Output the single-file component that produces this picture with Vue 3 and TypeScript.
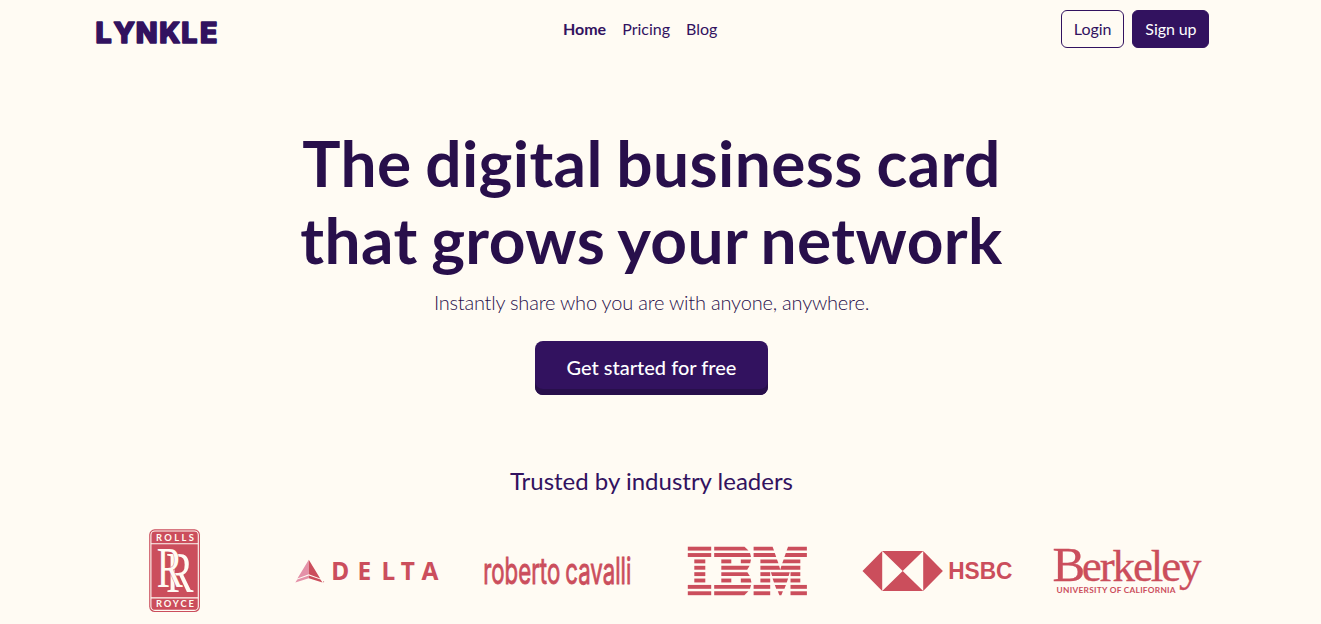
<template>
  <div class="page">
    <header class="container navbar">
      <a class="brand" href="#" aria-label="Lynkle">
        <svg width="126" height="38" viewBox="0 0 126 38">
          <text class="brand-text" x="1.4 19.6 41.8 65.2 87.2 106" y="33.3">LYNKLE</text>
        </svg>
      </a>
      <nav class="nav">
        <a
          v-for="link in links"
          :key="link"
          href="#"
          class="nav-link"
          :class="{ 'nav-link--active': link === current }"
          @click.prevent="current = link"
        >{{ link }}</a>
      </nav>
      <div class="actions">
        <a class="btn btn--outline" href="#">Login</a>
        <a class="btn btn--solid" href="#">Sign up</a>
      </div>
    </header>

    <main class="container">
      <section class="hero">
        <h1>The digital business card<br>that grows your network</h1>
        <p>Instantly share who you are with anyone, anywhere.</p>
        <a class="cta" href="#">Get started for free</a>
      </section>

      <section class="trusted">
        <h2>Trusted by industry leaders</h2>
        <div class="logos">
          <!-- Rolls Royce -->
          <svg class="logo" viewBox="0 0 166 90">
            <rect x="55.2" y="3.3" width="50.8" height="82.8" rx="5.5" />
            <rect class="line" x="56.9" y="5" width="47.4" height="79.4" rx="4" />
            <path class="line" d="M56.9 17.8h47.4M56.9 71.9h47.4" />
            <text class="rr-label" x="61.9" y="15.4" textLength="38">ROLLS</text>
            <text class="rr-label" x="61.9" y="81.4" textLength="38">ROYCE</text>
            <text class="rr-mono" x="72" y="66" textLength="27.5" lengthAdjust="spacingAndGlyphs">R</text>
            <text class="rr-mono" x="62.8" y="60.7" textLength="26" lengthAdjust="spacingAndGlyphs">R</text>
          </svg>

          <!-- Delta -->
          <svg class="logo" viewBox="0 0 166 90">
            <path class="light" d="M24.8 33.8v14.4L13.4 52.4zM24.8 49.6v2.6L11.3 56.4l2-3z" />
            <path d="M24.8 33.8v14.4l11.4 4.2zM24.8 49.6v2.6l13.7 4.2-2-3z" />
            <circle cx="39.6" cy="55.8" r=".5" />
            <text class="delta" x="47.2 73.5 97.6 116.8 137.6" y="53.7">DELTA</text>
          </svg>

          <!-- Roberto Cavalli -->
          <svg class="logo" viewBox="0 0 166 90">
            <text class="cavalli" x="9.3" y="57.6" textLength="148" lengthAdjust="spacingAndGlyphs">roberto cavalli</text>
          </svg>

          <!-- IBM -->
          <svg class="logo" viewBox="0 0 166 90" role="img" aria-label="IBM">
            <template v-for="(row, i) in ibmRows" :key="i">
              <polygon v-for="bar in row" :key="bar[0]" :points="barPoints(bar, i)" />
            </template>
          </svg>

          <!-- HSBC -->
          <svg class="logo" viewBox="0 0 166 90">
            <path d="M8.5 45l19.7-20v40zM88.9 45L69.2 25v40zM28.2 25h41L48.7 45zM28.2 65h41L48.7 45z" />
            <text class="hsbc" x="94.2" y="53.4" textLength="64.3" lengthAdjust="spacingAndGlyphs">HSBC</text>
          </svg>

          <!-- Berkeley -->
          <svg class="logo" viewBox="0 0 166 90">
            <text class="berkeley" x="8.6" y="55"><tspan class="berkeley-cap">B</tspan>erkeley</text>
            <text class="berkeley-sub" x="12.6" y="66.5" textLength="119">UNIVERSITY OF CALIFORNIA</text>
          </svg>
        </div>
      </section>
    </main>
  </div>
</template>

<script setup lang="ts">
import { ref } from 'vue'

const links = ['Home', 'Pricing', 'Blog']
const current = ref('Home')

// Striped mark: start and end of every bar, then the slant of its left and right edge
type Bar = [number, number, number?, number?]
const ibmRows: Bar[][] = [
  [[23.8, 47.2], [50.2, 80.5, 0, 4], [89.6, 108.6, 0, 1.4], [124, 142.9, -1.4, 0]],
  [[23.8, 47.2], [50.2, 86, 0, 1], [89.6, 110.8, 0, 1.4], [121.8, 142.9, -1.4, 0]],
  [[30.3, 41.3], [57.3, 67.3], [76.8, 87, 0, -0.8], [96.4, 113, 0, 1.4], [119.6, 136.3, -1.4, 0]],
  [[30.3, 41.3], [57.3, 85.6, 0, -2.4], [96.4, 115.1, 0, 1.2], [117.4, 136.3, -1.2, 0]],
  [[30.3, 41.3], [57.3, 83.4, 0, 2.4], [96.4, 106.2], [106.9, 125.8, 1.2, -1.2], [126.5, 136.3]],
  [[30.3, 41.3], [57.3, 67.3], [76.8, 86.6, 0, 0.8], [96.4, 106.2], [108.6, 124.1, 1.4, -1.4], [126.5, 136.3]],
  [[23.8, 47.2], [50.2, 87, 0, -1], [89.6, 106.2], [110.8, 121.9, 1.4, -1.4], [126.5, 142.9]],
  [[23.8, 47.2], [50.2, 84.4, 0, -4], [89.6, 106.2], [113.8, 118.9, 1.6, -1.6], [126.5, 142.9]],
]

function barPoints([from, to, left = 0, right = 0]: Bar, row: number) {
  const top = 20.7 + row * 6.37
  const bottom = top + 3.9
  return `${from},${top} ${to},${top} ${to + right},${bottom} ${from + left},${bottom}`
}
</script>

<style>
body {
  background: #fffbf3;
}
</style>

<style scoped>
.page {
  height: 624px;
  padding-right: 18px;
  overflow: hidden;
  box-sizing: border-box;
  background: #fffbf3;
  color: #32125f;
  font-family: Lato, sans-serif;
  font-size: 16px;
  line-height: 1.5;
}

a {
  color: inherit;
  text-decoration: none;
}

svg {
  overflow: visible;
}

.container {
  width: 1116px;
  margin: 0 auto;
}

.navbar {
  display: flex;
  align-items: center;
  justify-content: space-between;
  padding-top: 10px;
}

.brand,
.brand svg {
  display: block;
}

.brand-text {
  font-family: Inter, sans-serif;
  font-weight: 800;
  font-size: 28.5px;
  fill: #32125f;
  stroke: #32125f;
  stroke-width: 1.6;
  stroke-linejoin: round;
}

.nav {
  display: flex;
}

.nav-link {
  padding: 0 8px;
}

.nav-link--active {
  font-weight: 700;
}

.actions {
  display: flex;
  gap: 8px;
}

.btn {
  padding: 6px 12px;
  border: 1px solid #32125f;
  border-radius: 6px;
}

.btn--outline {
  letter-spacing: -0.04px;
}

.btn--solid {
  background: #32125f;
  color: #fff;
  letter-spacing: -0.08px;
}

.hero {
  display: flex;
  flex-direction: column;
  align-items: center;
  padding-top: 77px;
  text-align: center;
}

h1 {
  margin: 0 0 8px;
  color: #280f4b;
  font-size: 64px;
  font-weight: 700;
  letter-spacing: 0.4px;
  line-height: 1.2;
  word-spacing: -2.4px;
}

.hero p {
  margin: 0 0 24px;
  color: #280f4b;
  font-size: 20px;
  font-weight: 300;
  letter-spacing: -0.2px;
}

.cta {
  padding: 11px 32px 13px;
  border-radius: 8px;
  background: #32125f;
  box-shadow: inset 0 -6px 0 #280f4b;
  color: #fff;
  font-size: 20px;
  font-weight: 500;
}

.trusted {
  padding-top: 72px;
}

h2 {
  margin: 0 0 31px;
  font-size: 24px;
  font-weight: 400;
  line-height: 1.2;
  text-align: center;
}

.logos {
  display: grid;
  grid-template-columns: repeat(6, 166px);
  column-gap: 24px;
}

.logo {
  display: block;
  width: 166px;
  height: 90px;
  fill: #cb4e5c;
}

.line {
  fill: none;
  stroke: #fffbf3;
  stroke-width: 1.1;
}

.light {
  fill: #e491a8;
}

.rr-label {
  fill: #fffbf3;
  font: 700 9.4px Lato, sans-serif;
}

.rr-mono {
  fill: #fffbf3;
  stroke: #cb4e5c;
  stroke-width: 1;
  paint-order: stroke;
  font: 400 56px 'Liberation Serif', serif;
}

.delta {
  font: 700 24.5px 'Noto Sans', sans-serif;
}

.cavalli {
  stroke: #cb4e5c;
  stroke-width: 0.9;
  font: 400 37px Inter, sans-serif;
  word-spacing: -2px;
}

.hsbc {
  font: 700 23.5px 'Liberation Sans', sans-serif;
}

.berkeley {
  font: 400 45px 'Liberation Serif', serif;
  letter-spacing: -2.1px;
  stroke: #cb4e5c;
  stroke-width: 0.3;
}

.berkeley-cap {
  font-size: 49px;
  letter-spacing: -3.5px;
}

.berkeley-sub {
  font: 700 8.3px Lato, sans-serif;
}
</style>
